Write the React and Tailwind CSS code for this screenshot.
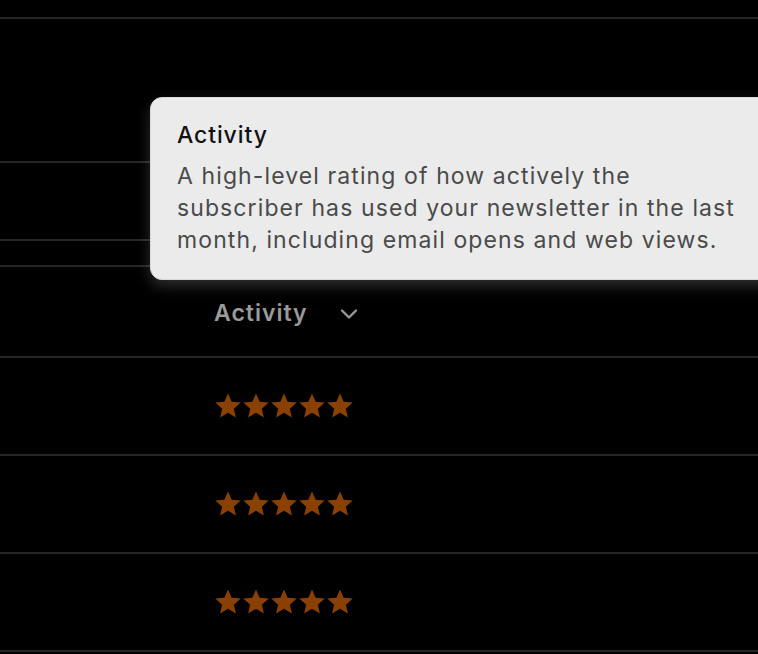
import { ChevronDown } from "lucide-react";

const Star = () => (
  <svg width="26" height="25" viewBox="1.4 1.4 21.2 20.8" className="text-[#8a4000]">
    <path
      fill="currentColor"
      d="M12 1.8l3.05 6.9 7.5.7-5.67 5 1.68 7.37L12 17.9l-6.56 3.87 1.68-7.37-5.67-5 7.5-.7z"
    />
  </svg>
);

const Stars = () => (
  <div className="flex items-center gap-[2px] pl-[1px]">
    {[0, 1, 2, 3, 4].map((i) => (
      <Star key={i} />
    ))}
  </div>
);

const App = () => (
  <div
    className="relative h-[654px] w-[758px] overflow-hidden bg-black"
    style={{ fontFamily: "Inter, 'Noto Sans', sans-serif" }}
  >
    <div className="flex flex-col">
      <div className="h-[19px] border-b-2 border-[#262626]" />
      <div className="h-[144px] border-b-2 border-[#262626]" />
      <div className="h-[78px] border-b-2 border-[#262626]" />
      <div className="h-[26px] border-b-2 border-[#262626]" />

      {/* Header row */}
      <div className="flex h-[91px] items-center border-b-2 border-[#262626] pt-[4px] pl-[214px]">
        <span className="text-[23px] font-semibold tracking-[1px] text-[#9a9a9a]">Activity</span>
        <ChevronDown size={28} strokeWidth={2} className="ml-[27px] text-[#9a9a9a]" />
      </div>

      {/* Rating rows */}
      {[0, 1, 2].map((r) => (
        <div key={r} className="flex h-[98px] items-center border-b-2 border-[#262626] pb-[2px] pl-[214px]">
          <Stars />
        </div>
      ))}
    </div>

    {/* Tooltip */}
    <div className="absolute left-[150px] top-[97px] h-[183px] w-[660px] rounded-[12px] border border-[#d8d8d8] bg-[#ebebeb] px-[26px] pt-[21px] shadow-[0_6px_14px_rgba(255,255,255,0.18)]">
      <p className="text-[23px] font-medium leading-[32px] tracking-[0.9px] text-[#111]">Activity</p>
      <p className="mt-[9px] w-[570px] text-[23px] leading-[32px] tracking-[1.1px] text-[#4a4a4a]">
        A high-level rating of how actively the subscriber has used your newsletter in the last month, including email opens and web views.
      </p>
    </div>
  </div>
);

export default App;
